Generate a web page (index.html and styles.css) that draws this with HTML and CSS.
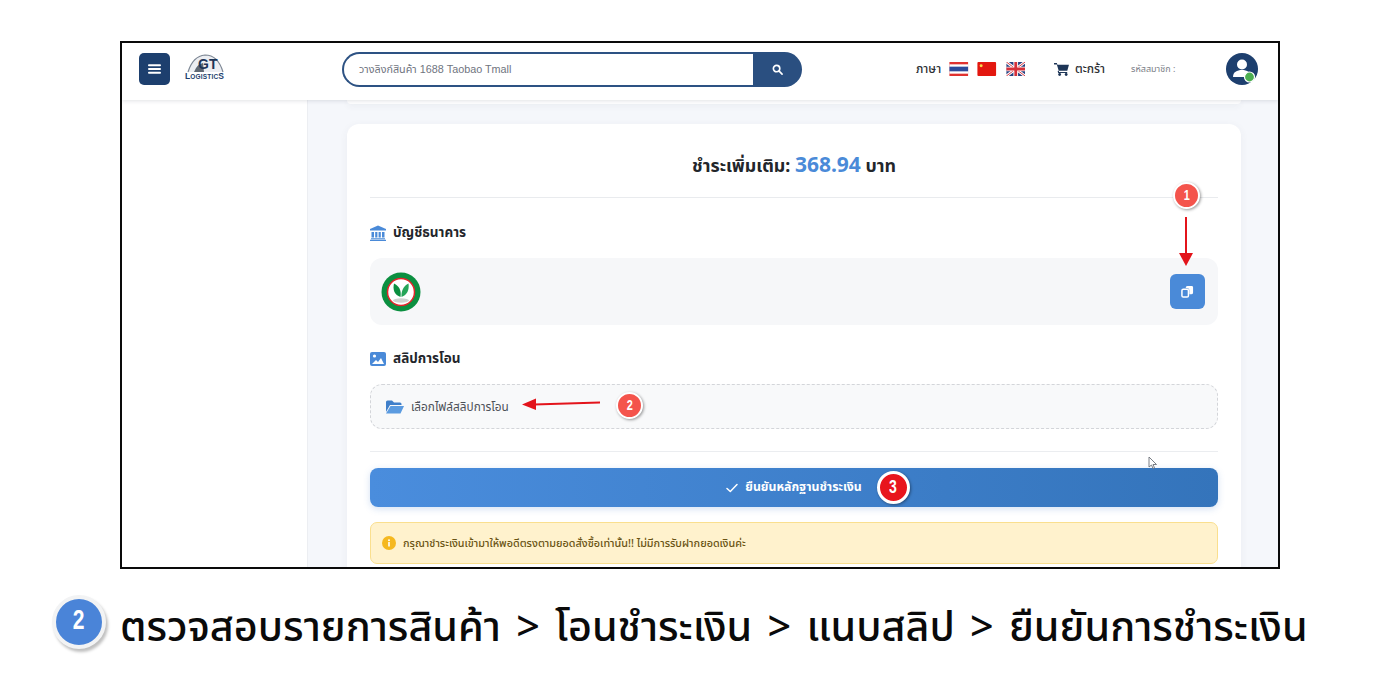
FILE: index.html
```html
<!DOCTYPE html>
<html lang="th">
<head>
<meta charset="utf-8">
<title>ยืนยันการชำระเงิน</title>
<link rel="stylesheet" href="styles.css">
</head>
<body>
<div class="frame">
  <header class="topbar">
    <button class="menu-btn" aria-label="เมนู">
      <svg viewBox="0 0 14 12" width="13" height="12"><path d="M1 2h12M1 6h12M1 10h12" stroke="#fff" stroke-width="2" stroke-linecap="round"/></svg>
    </button>
    <div class="logo">
      <svg viewBox="0 0 42 19" width="42" height="19"><path d="M3 18 Q8 2 20 1 Q33 1 38 18" fill="#eceef2" stroke="#7d8794" stroke-width="1.200"/><path d="M9 18 Q12 10 18 9 L19 18Z" fill="#5f6873"/></svg>
      <span class="logo-gt">GT</span>
      <span class="logo-text">L<small>OGISTIC</small>S</span>
    </div>
    <form class="search">
      <div class="search-input">วางลิงก์สินค้า 1688 Taobao Tmall</div>
      <button class="search-btn" aria-label="ค้นหา">
        <svg viewBox="0 0 12 12" width="11" height="11"><circle cx="5" cy="5" r="3.500" fill="none" stroke="#fff" stroke-width="1.800"/><path d="M7.800 7.800L11 11" stroke="#fff" stroke-width="1.800" stroke-linecap="round"/></svg>
      </button>
    </form>
    <div class="lang">
      <span class="lang-label">ภาษา</span>
      <svg class="flag" viewBox="0 0 20 15"><rect width="20" height="15" fill="#e0322f"/><rect y="2.500" width="20" height="10" fill="#fff"/><rect y="5" width="20" height="5" fill="#2d4a9a"/></svg>
      <svg class="flag" viewBox="0 0 20 15"><rect width="20" height="15" rx="1" fill="#e3170f"/><circle cx="4" cy="4" r="1.600" fill="#f8d84a"/></svg>
      <svg class="flag" viewBox="0 0 20 15"><rect width="20" height="15" fill="#27407f"/><path d="M0 0L20 15M20 0L0 15" stroke="#fff" stroke-width="3"/><path d="M0 0L20 15M20 0L0 15" stroke="#d5303a" stroke-width="1"/><path d="M10 0V15M0 7.500H20" stroke="#fff" stroke-width="5"/><path d="M10 0V15M0 7.500H20" stroke="#d5303a" stroke-width="3"/></svg>
    </div>
    <div class="cart">
      <svg viewBox="0 0 16 15" width="15" height="14"><path d="M0 1h3l.6 2H16l-1.800 6.500H5L3 2.600H0z" fill="#1d3557"/><path d="M4.500 9.500l.4 1.800h9.200" fill="none" stroke="#1d3557" stroke-width="1.200"/><circle cx="6" cy="13.400" r="1.500" fill="#1d3557"/><circle cx="13" cy="13.400" r="1.500" fill="#1d3557"/></svg>
      <span>ตะกร้า</span>
    </div>
    <span class="member">รหัสสมาชิก :</span>
    <div class="avatar">
      <svg viewBox="0 0 32 32" width="32" height="32"><circle cx="16" cy="16" r="16" fill="#1d3f6e"/><circle cx="16" cy="11.500" r="5" fill="#fff"/><path d="M7 24c0-5 4-7 9-7s9 2 9 7z" fill="#fff"/><circle cx="23.500" cy="24" r="5" fill="#4caf50" stroke="#fff" stroke-width="1.200"/></svg>
    </div>
  </header>
  <div class="body">
    <aside class="sidebar"></aside>
    <main class="main">
      <div class="prev-card"></div>
      <section class="card">
        <h1 class="pay-title">ชำระเพิ่มเติม: <span class="amount">368.94</span> บาท</h1>
        <h2 class="section-title bank">
          <svg viewBox="0 0 16 16" width="16" height="16"><path d="M8 .5L16 4v1.500H0V4z" fill="#4a8ad8"/><path d="M1.500 7h2.500v5.500H1.500zM5.200 7h2.200v5.500H5.200zM8.600 7h2.200v5.500H8.600zM12 7h2.500v5.500H12z" fill="#4a8ad8"/><path d="M1 13.200h14v1H1zM0 14.800h16V16H0z" fill="#4a8ad8"/></svg>
          บัญชีธนาคาร
        </h2>
        <div class="bank-row">
          <svg class="kbank" viewBox="0 0 40 40" width="40" height="40">
            <circle cx="20" cy="20" r="19.500" fill="#0b8f40"/>
            <circle cx="20" cy="20" r="13.500" fill="#fff" stroke="#e3242b" stroke-width="1.500"/>
            <path d="M19.500 25C13.500 23 11.500 18 13 11.500 18 14 20.500 18 19.500 25Z" fill="#0b8f40"/>
            <path d="M20.500 25C20 19 22.500 14 27.500 11.500 28.500 18 26 23 20.500 25Z" fill="#25a558"/>
            <ellipse cx="20" cy="28.500" rx="8" ry="2.200" fill="#cfd3d1"/>
          </svg>
          <button class="copy-btn" aria-label="คัดลอก">
            <svg viewBox="0 0 14 14" width="13" height="13"><rect x="1" y="4.500" width="7" height="8.500" rx="1.500" fill="none" stroke="#fff" stroke-width="1.600"/><path d="M5 3a2 2 0 0 1 2-2h4.500A1.500 1.500 0 0 1 13 2.500V8a2 2 0 0 1-2 2H9V5.500A2 2 0 0 0 7 3.500z" fill="#fff"/></svg>
          </button>
        </div>
        <h2 class="section-title slip">
          <svg viewBox="0 0 16 14" width="16" height="14"><rect width="16" height="14" rx="2" fill="#4a8ad8"/><circle cx="4.500" cy="4" r="1.600" fill="#fff"/><path d="M2 12l4-4 2 2 3-4 3 6z" fill="#fff"/></svg>
          สลิปการโอน
        </h2>
        <div class="file-box">
          <svg viewBox="0 0 18 14" width="18" height="14"><path d="M0 2a1.500 1.500 0 0 1 1.500-1.500h4.500l2 2h6a1.500 1.500 0 0 1 1.500 1.500V5H4L0 12z" fill="#3f7fca"/><path d="M4.500 6H18l-3.500 7.500H0z" fill="#5b9be0"/></svg>
          <span>เลือกไฟล์สลิปการโอน</span>
        </div>
        <hr class="divider">
        <button class="confirm-btn">
          <svg viewBox="0 0 12 10" width="12" height="10"><path d="M1 5.500L4.300 8.500 11 1.500" fill="none" stroke="#fff" stroke-width="1.500" stroke-linecap="round" stroke-linejoin="round"/></svg>
          ยืนยันหลักฐานชำระเงิน
        </button>
        <div class="alert">
          <svg viewBox="0 0 14 14" width="14" height="14"><circle cx="7" cy="7" r="7" fill="#f5b81f"/><rect x="6.200" y="6" width="1.600" height="4.500" fill="#fff"/><circle cx="7" cy="4.200" r="1" fill="#fff"/></svg>
          <span>กรุณาชำระเงินเข้ามาให้พอดีตรงตามยอดสั่งซื้อเท่านั้น!! ไม่มีการรับฝากยอดเงินค่ะ</span>
        </div>
      </section>
    </main>
  </div>
  <span class="mark mark-1"><span class="narrow">1</span></span>
  <svg class="arrow arrow-1" viewBox="0 0 14 50" width="14" height="50"><path d="M7 0V38" stroke="#e3141b" stroke-width="2"/><path d="M0 36H14L7 49z" fill="#e3141b"/></svg>
  <span class="mark mark-2"><span class="narrow">2</span></span>
  <svg class="arrow arrow-2" viewBox="0 0 78 12" width="78" height="12"><path d="M12 6.500L78 4.500" stroke="#e3141b" stroke-width="2"/><path d="M14 .5V12L0 6.500z" fill="#e3141b"/></svg>
  <span class="mark mark-3"><span class="narrow">3</span></span>
  <svg class="cursor" viewBox="0 0 10 13" width="10" height="13"><path d="M1 1v10l2.500-2 1.500 3.500 1.500-.7L5 8.500h3.500z" fill="#fff" stroke="#6b7078" stroke-width=".9"/></svg>
</div>
<footer class="caption">
  <span class="step"><span class="narrow">2</span></span>
  <p class="caption-text">ตรวจสอบรายการสินค้า &gt; โอนชำระเงิน &gt; แนบสลิป &gt; ยืนยันการชำระเงิน</p>
</footer>
</body>
</html>
```
FILE: styles.css
```css
* { box-sizing: border-box; }
html, body { margin: 0; padding: 0; }
body {
  width: 1376px;
  height: 688px;
  overflow: hidden;
  background: #fff;
  padding: 41px 0 0 120px;
  font-family: "Noto Sans", "Noto Sans Thai", "Liberation Sans", sans-serif;
  color: #24272c;
}
button { border: 0; padding: 0; font: inherit; }
h1, h2, p { margin: 0; }

.frame {
  position: relative;
  width: 1160px;
  height: 528px;
  border: 2px solid #0a0a0a;
  overflow: hidden;
  display: flex;
  flex-direction: column;
  background: #fff;
}

.topbar {
  height: 57px;
  flex: none;
  display: flex;
  align-items: center;
  padding: 0 20px 5px 17px;
  background: #fff;
  box-shadow: 0 1px 4px rgba(40, 50, 70, .14);
  position: relative;
  z-index: 2;
}
.menu-btn {
  width: 31px;
  height: 32px;
  flex: none;
  border-radius: 5px;
  background: #1d3f6e;
  display: flex;
  align-items: center;
  justify-content: center;
}
.logo {
  position: relative;
  width: 42px;
  height: 26px;
  flex: none;
  margin: 0 0 4px 15px;
}
.logo svg { display: block; }
.logo-gt {
  position: absolute;
  top: 3px;
  left: 13px;
  font: 700 14px/14px "Liberation Sans", sans-serif;
  color: #1d3557;
}
.logo-text {
  position: absolute;
  left: 0;
  top: 18px;
  font: 700 8.500px/9px "Liberation Sans", sans-serif;
  color: #1d3f6e;
  white-space: nowrap;
}
.logo-text small { font-size: 6.500px; letter-spacing: .2px; }
.search {
  display: flex;
  flex: none;
  width: 460px;
  height: 35px;
  margin: 0 0 0 115px;
}
.search-input {
  flex: 1;
  border: 2px solid #2d5283;
  border-right: 0;
  border-radius: 18px 0 0 18px;
  padding-left: 15px;
  font-family: "Liberation Sans", "Noto Sans", "Noto Sans Thai", sans-serif;
  font-size: 10.800px;
  line-height: 30px;
  color: #6f7480;
}
.search-btn {
  width: 49px;
  background: #2a4f80;
  border-radius: 0 18px 18px 0;
  display: flex;
  align-items: center;
  justify-content: center;
}
.lang {
  display: flex;
  flex: none;
  align-items: center;
  margin-left: 114px;
}
.lang-label { font-size: 12px; font-weight: 500; color: #2b2e33; margin-right: 8px; }
.flag { width: 19.500px; height: 14px; margin-right: 8.800px; display: block; }
.cart {
  display: flex;
  flex: none;
  align-items: center;
  gap: 6px;
  margin-left: 20px;
  font-size: 12px;
  font-weight: 500;
  color: #2b2e33;
}
.member { flex: 1; font-size: 9px; color: #7c8087; margin-left: 26px; }
.avatar { width: 32px; height: 32px; flex: none; }

.body { flex: 1; display: flex; min-height: 0; }
.sidebar { width: 186px; flex: none; background: #fff; border-right: 1px solid #eceef2; }
.main {
  flex: 1;
  background: #f5f7fb;
  padding: 0 37px 0 39px;
  overflow: hidden;
}
.prev-card {
  height: 4px;
  background: #fff;
  border-radius: 0 0 10px 10px;
  box-shadow: 0 2px 6px rgba(60, 70, 90, .07);
  margin-bottom: 20px;
}
.card {
  height: 500px;
  background: #fff;
  border-radius: 12px;
  box-shadow: 0 2px 8px rgba(60, 70, 90, .06);
  padding: 23px 23px 0;
}
.pay-title {
  height: 51px;
  border-bottom: 1px solid #e9ebee;
  text-align: center;
  font-size: 17.800px;
  line-height: 35px;
  font-weight: 700;
  color: #23262b;
}
.amount { color: #4a8ad8; font-size: 21px; }
.section-title {
  display: flex;
  align-items: center;
  gap: 7px;
  height: 22px;
  font-size: 13.500px;
  font-weight: 700;
  color: #23262b;
}
.section-title.bank { margin-top: 24px; }
.bank-row {
  height: 67px;
  margin-top: 14px;
  background: #f6f7f9;
  border-radius: 12px;
  display: flex;
  align-items: center;
  justify-content: space-between;
  padding: 0 13px 0 11px;
}
.copy-btn {
  width: 35px;
  height: 35px;
  border-radius: 6px;
  background: #4a8ad8;
  display: flex;
  align-items: center;
  justify-content: center;
}
.section-title.slip { margin-top: 23px; }
.file-box {
  height: 45px;
  margin-top: 14px;
  border: 1px dashed #d3d5d9;
  border-radius: 12px;
  background: #f8f9fa;
  display: flex;
  align-items: center;
  gap: 7px;
  padding-left: 15px;
  font-size: 11.800px;
  color: #4c5057;
}
.divider {
  height: 1px;
  border: 0;
  background: #ebedf0;
  margin: 22px 0 16px;
}
.confirm-btn {
  width: 100%;
  height: 39px;
  border-radius: 8px;
  background: linear-gradient(90deg, #4a8ddd, #3474bb);
  box-shadow: 0 2px 7px rgba(60, 120, 200, .22);
  color: #fff;
  font-size: 12.300px;
  font-weight: 700;
  display: flex;
  align-items: center;
  justify-content: center;
  gap: 7px;
}
.alert {
  height: 42px;
  margin-top: 15px;
  background: #fff2cd;
  border: 1px solid #fadf8e;
  border-radius: 7px;
  display: flex;
  align-items: center;
  gap: 7px;
  padding-left: 11px;
  font-size: 10.800px;
  font-weight: 500;
  color: #6a5414;
}

.narrow { display: inline-block; transform: scaleX(.78); }
.mark {
  position: absolute;
  z-index: 3;
  width: 27px;
  height: 27px;
  border-radius: 50%;
  background: #f4544c;
  border: 2px solid #fff;
  box-shadow: 1px 1px 3px rgba(0, 0, 0, .4);
  color: #fff;
  font: 700 14px/23px "Liberation Sans", sans-serif;
  text-align: center;
}
.mark-1 { left: 1051px; top: 139px; }
.mark-2 { left: 494px; top: 349px; }
.mark-3 { left: 755px; top: 428px; width: 33px; height: 33px; background: #e8151d; border-width: 3px; font-size: 18px; line-height: 27px; }
.arrow { position: absolute; z-index: 3; display: block; }
.arrow-1 { left: 1057px; top: 174px; }
.arrow-2 { left: 400px; top: 355px; }
.cursor { position: absolute; z-index: 3; left: 1026px; top: 413px; }

.caption {
  display: flex;
  align-items: flex-start;
  margin: 26px 0 0 -68px;
  gap: 14px;
}
.step {
  width: 54px;
  height: 54px;
  flex: none;
  border-radius: 50%;
  background: #4a84d8;
  border: 4.500px solid #f2f3f4;
  box-shadow: 2px 3px 3px rgba(0, 0, 0, .25);
  color: #fff;
  font: 700 27px/43px "Liberation Sans", sans-serif;
  text-align: center;
}
.caption-text {
  font-size: 41.300px;
  line-height: 52px;
  margin-top: 4px;
  font-weight: 500;
  word-spacing: 4.500px;
  color: #0a0a0a;
  white-space: nowrap;
}
```
